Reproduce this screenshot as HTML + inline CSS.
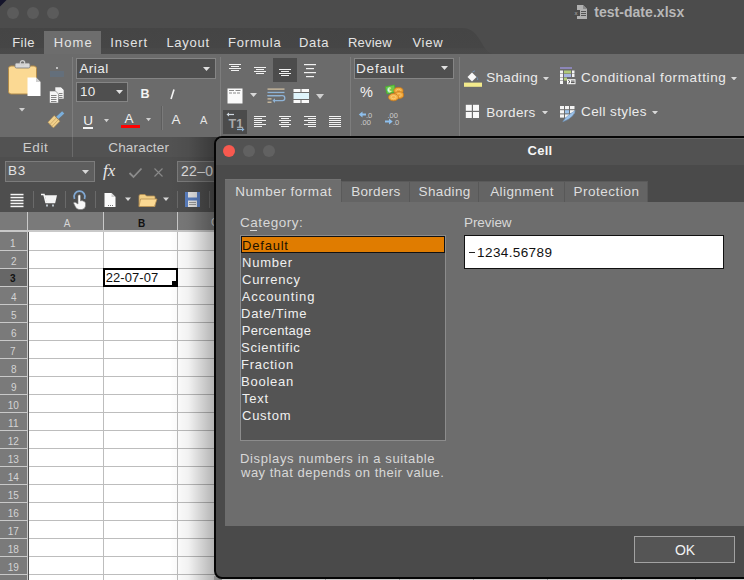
<!DOCTYPE html>
<html><head><meta charset="utf-8">
<style>
*{margin:0;padding:0;box-sizing:border-box}
html,body{width:744px;height:580px;overflow:hidden;background:#4c4c4c;font-family:"Liberation Sans",sans-serif;position:relative}
.a{position:absolute}
.t{position:absolute;white-space:nowrap;line-height:1}
.circ{position:absolute;width:12px;height:12px;border-radius:50%}
</style></head><body>

<div class="a" style="left:0px;top:0px;width:744px;height:28px;background:#4c4c4c;"></div>
<svg class="a" style="left:0px;top:0px;" width="8" height="8" viewBox="0 0 8 8"><path d="M0,0 H6.5 L0,6.5 Z" fill="#15152b"/></svg>
<div class="circ" style="left:7px;top:7px;background:#5b5b5b"></div>
<div class="circ" style="left:27px;top:7px;background:#5b5b5b"></div>
<div class="circ" style="left:47px;top:7px;background:#5b5b5b"></div>
<svg class="a" style="left:574px;top:4px;" width="14" height="16" viewBox="0 0 14 16"><path d="M3,1 H9 L13,5 V15 H3 Z" fill="#b0b0b0"/><path d="M9,1 V5 H13" fill="#8a8a8a"/><rect x="7" y="7" width="5" height="1" fill="#555"/><rect x="7" y="9" width="5" height="1" fill="#555"/><rect x="7" y="11" width="5" height="1" fill="#555"/><rect x="0" y="6" width="6" height="6" fill="#4a4a4a"/><text x="0.5" y="11" font-size="6" font-family="Liberation Sans" fill="#b0b0b0">x</text></svg>
<div class="t" style="left:594.20px;top:5.15px;font-size:14px;font-weight:bold;color:#b8b8b8;letter-spacing:0.039px;">test-date.xlsx</div>
<svg class="a" style="left:0px;top:28px;" width="744" height="26" viewBox="0 0 744 26"><defs><linearGradient id="tbg" x1="0" y1="0" x2="0" y2="1"><stop offset="0" stop-color="#454545"/><stop offset="0.75" stop-color="#464646"/><stop offset="0.8" stop-color="#494949"/><stop offset="1" stop-color="#4a4a4a"/></linearGradient></defs><path d="M0,0 H462 C472,0 476,6 480,12 C484,19 488,26 494,26 H0 Z" fill="url(#tbg)"/></svg>
<div class="a" style="left:44px;top:31px;width:57px;height:23px;background:#6d6d6d;"></div>
<div class="t" style="left:12.20px;top:36.00px;font-size:13px;font-weight:normal;color:#e4e4e4;letter-spacing:0.467px;">File</div>
<div class="t" style="left:53.80px;top:36.00px;font-size:13px;font-weight:normal;color:#e4e4e4;letter-spacing:1.099px;">Home</div>
<div class="t" style="left:110.20px;top:36.00px;font-size:13px;font-weight:normal;color:#e4e4e4;letter-spacing:0.900px;">Insert</div>
<div class="t" style="left:166.40px;top:36.00px;font-size:13px;font-weight:normal;color:#e4e4e4;letter-spacing:0.740px;">Layout</div>
<div class="t" style="left:228.00px;top:36.00px;font-size:13px;font-weight:normal;color:#e4e4e4;letter-spacing:0.850px;">Formula</div>
<div class="t" style="left:299.00px;top:36.00px;font-size:13px;font-weight:normal;color:#e4e4e4;letter-spacing:0.667px;">Data</div>
<div class="t" style="left:348.00px;top:36.00px;font-size:13px;font-weight:normal;color:#e4e4e4;letter-spacing:0.200px;">Review</div>
<div class="t" style="left:412.40px;top:36.00px;font-size:13px;font-weight:normal;color:#e4e4e4;letter-spacing:0.733px;">View</div>
<div class="a" style="left:0px;top:54px;width:744px;height:83px;background:#6b6b6b;"></div>
<div class="a" style="left:72px;top:57px;width:1px;height:80px;background:#7d7d7d;"></div>
<div class="a" style="left:220px;top:57px;width:1px;height:80px;background:#7d7d7d;"></div>
<div class="a" style="left:350px;top:57px;width:1px;height:80px;background:#7d7d7d;"></div>
<div class="a" style="left:459px;top:57px;width:1px;height:80px;background:#7d7d7d;"></div>
<svg class="a" style="left:7px;top:60px;" width="36" height="38" viewBox="0 0 36 38"><rect x="1.5" y="6" width="28" height="28" rx="2.5" fill="#fbd993" stroke="#b08a4a" stroke-width="1"/><rect x="8" y="3" width="15" height="5" rx="1.5" fill="#d8d8d8" stroke="#777" stroke-width="0.8"/><circle cx="15.5" cy="2.8" r="2.2" fill="none" stroke="#cfcfcf" stroke-width="1.2"/><path d="M20.5,17.5 H29 L33.5,22 V36 H20.5 Z" fill="#ffffff"/><path d="M29,17.5 V22 H33.5" fill="#cfcfcf"/></svg>
<svg class="a" style="left:19.0px;top:108.25px;" width="6" height="3.5" viewBox="0 0 6 3.5"><polygon points="0,0 6,0 3.0,3.5" fill="#d0d0d0"/></svg>
<svg class="a" style="left:47px;top:64px;" width="18" height="14" viewBox="0 0 18 14"><rect x="3" y="7" width="14" height="6" fill="#627080" opacity="0.75"/><circle cx="10" cy="4" r="1" fill="#dcdcdc"/></svg>
<svg class="a" style="left:48px;top:86px;" width="18" height="18" viewBox="0 0 18 18"><path d="M7,1 H13 L16,4 V13 H7 Z" fill="#f2f2f2" stroke="#6b6b6b" stroke-width="0.6"/><path d="M1.5,5 H7.5 L10.5,8 V17 H1.5 Z" fill="#f5f5f5" stroke="#6b6b6b" stroke-width="0.6"/><rect x="3" y="9" width="5.5" height="0.9" fill="#777"/><rect x="3" y="11" width="5.5" height="0.9" fill="#777"/><rect x="3" y="13" width="5.5" height="0.9" fill="#777"/><rect x="3" y="15" width="5.5" height="0.9" fill="#777"/><rect x="11" y="7" width="3.5" height="0.9" fill="#777"/><rect x="11" y="9" width="3.5" height="0.9" fill="#777"/><rect x="11" y="11" width="3.5" height="0.9" fill="#777"/></svg>
<svg class="a" style="left:47px;top:111px;" width="18" height="18" viewBox="0 0 18 18"><path d="M10.3,6.8 L16.2,1.3" stroke="#7aaedb" stroke-width="3.2"/><polygon points="0.8,11.2 7.2,4.4 13,10.2 6.4,17" fill="#f1d08b" stroke="#9d8250" stroke-width="0.6"/><path d="M3,13.5 L9.2,7 M5,15.3 L11.2,8.8" stroke="#c7a261" stroke-width="0.8"/></svg>
<div class="a" style="left:76px;top:58px;width:140px;height:21px;background:#4f4f4f;border:1px solid #858585"></div>
<div class="t" style="left:79.40px;top:61.57px;font-size:13.5px;font-weight:normal;color:#ececec;letter-spacing:0.475px;">Arial</div>
<svg class="a" style="left:202.5px;top:66.5px;" width="7" height="4" viewBox="0 0 7 4"><polygon points="0,0 7,0 3.5,4" fill="#e0e0e0"/></svg>
<div class="a" style="left:76px;top:82px;width:52px;height:20px;background:#4f4f4f;border:1px solid #858585"></div>
<div class="t" style="left:80.00px;top:84.57px;font-size:13.5px;font-weight:normal;color:#ececec;letter-spacing:0.300px;">10</div>
<svg class="a" style="left:115.5px;top:90.3px;" width="7" height="4" viewBox="0 0 7 4"><polygon points="0,0 7,0 3.5,4" fill="#e0e0e0"/></svg>
<div class="t" style="left:140.50px;top:88.12px;font-size:12.5px;font-weight:bold;color:#f4f4f4;">B</div>
<svg class="a" style="left:169px;top:89px;" width="7" height="11" viewBox="0 0 7 11"><path d="M5,0.5 L2,10" stroke="#f4f4f4" stroke-width="1.6"/></svg>
<div class="t" style="left:83.30px;top:114.07px;font-size:13.5px;font-weight:normal;color:#f4f4f4;">U</div>
<div class="a" style="left:82.8px;top:127.3px;width:10px;height:1.4px;background:#f4f4f4;"></div>
<svg class="a" style="left:103.5px;top:119.4px;" width="5" height="3.2" viewBox="0 0 5 3.2"><polygon points="0,0 5,0 2.5,3.2" fill="#d0d0d0"/></svg>
<div class="t" style="left:124.60px;top:112.07px;font-size:13.5px;font-weight:normal;color:#f0f0f0;">A</div>
<div class="a" style="left:120.5px;top:124.5px;width:19px;height:3.5px;background:#ff0000;"></div>
<svg class="a" style="left:146.2px;top:118.4px;" width="5" height="3.2" viewBox="0 0 5 3.2"><polygon points="0,0 5,0 2.5,3.2" fill="#d0d0d0"/></svg>
<div class="a" style="left:161px;top:106px;width:1px;height:24px;background:#5e5e5e;"></div>
<div class="a" style="left:162px;top:106px;width:1px;height:24px;background:#7a7a7a;"></div>
<div class="t" style="left:171.50px;top:113.37px;font-size:13.5px;font-weight:normal;color:#ececec;">A</div>
<div class="t" style="left:200.00px;top:115.49px;font-size:11px;font-weight:normal;color:#e4e4e4;">A</div>
<svg class="a" style="left:0px;top:0px;pointer-events:none" width="744" height="140" viewBox="0 0 744 140"><rect x="229.0" y="64.0" width="12" height="1" fill="#f2f2f2"/><rect x="231.0" y="66.0" width="8" height="1" fill="#f2f2f2"/><rect x="229.0" y="68.0" width="12" height="1" fill="#f2f2f2"/><rect x="231.0" y="70.0" width="8" height="1" fill="#f2f2f2"/><rect x="254.0" y="67.0" width="12" height="1" fill="#f2f2f2"/><rect x="256.0" y="69.0" width="8" height="1" fill="#f2f2f2"/><rect x="254.0" y="71.0" width="12" height="1" fill="#f2f2f2"/><rect x="256.0" y="73.0" width="8" height="1" fill="#f2f2f2"/><rect x="273" y="58" width="24" height="24" fill="#4c4c4c"/><rect x="279.0" y="69.0" width="12" height="1" fill="#f2f2f2"/><rect x="281.0" y="71.0" width="8" height="1" fill="#f2f2f2"/><rect x="279.0" y="73.0" width="12" height="1" fill="#f2f2f2"/><rect x="281.0" y="75.0" width="8" height="1" fill="#f2f2f2"/><rect x="304.0" y="64.0" width="12" height="1.2" fill="#f2f2f2"/><rect x="306.0" y="68.0" width="8" height="1.2" fill="#f2f2f2"/><rect x="304.0" y="72.0" width="12" height="1.2" fill="#f2f2f2"/><rect x="306.0" y="76.0" width="8" height="1.2" fill="#f2f2f2"/><rect x="254.0" y="116.0" width="12" height="1" fill="#f2f2f2"/><rect x="254.0" y="118.0" width="8" height="1" fill="#f2f2f2"/><rect x="254.0" y="120.0" width="12" height="1" fill="#f2f2f2"/><rect x="254.0" y="122.0" width="8" height="1" fill="#f2f2f2"/><rect x="254.0" y="124.0" width="12" height="1" fill="#f2f2f2"/><rect x="254.0" y="126.0" width="8" height="1" fill="#f2f2f2"/><rect x="279.0" y="116.0" width="12" height="1" fill="#f2f2f2"/><rect x="281.0" y="118.0" width="8" height="1" fill="#f2f2f2"/><rect x="279.0" y="120.0" width="12" height="1" fill="#f2f2f2"/><rect x="281.0" y="122.0" width="8" height="1" fill="#f2f2f2"/><rect x="279.0" y="124.0" width="12" height="1" fill="#f2f2f2"/><rect x="281.0" y="126.0" width="8" height="1" fill="#f2f2f2"/><rect x="304.0" y="116.0" width="12" height="1" fill="#f2f2f2"/><rect x="308.0" y="118.0" width="8" height="1" fill="#f2f2f2"/><rect x="304.0" y="120.0" width="12" height="1" fill="#f2f2f2"/><rect x="308.0" y="122.0" width="8" height="1" fill="#f2f2f2"/><rect x="304.0" y="124.0" width="12" height="1" fill="#f2f2f2"/><rect x="308.0" y="126.0" width="8" height="1" fill="#f2f2f2"/><rect x="329.0" y="116.0" width="12" height="1" fill="#f2f2f2"/><rect x="329.0" y="118.0" width="12" height="1" fill="#f2f2f2"/><rect x="329.0" y="120.0" width="12" height="1" fill="#f2f2f2"/><rect x="329.0" y="122.0" width="12" height="1" fill="#f2f2f2"/><rect x="329.0" y="124.0" width="12" height="1" fill="#f2f2f2"/><rect x="329.0" y="126.0" width="12" height="1" fill="#f2f2f2"/></svg>
<svg class="a" style="left:227px;top:88px;" width="16" height="16" viewBox="0 0 16 16"><rect x="0.5" y="0.5" width="15" height="15" fill="#fafafa"/><rect x="2" y="2" width="5" height="1" fill="#888"/><rect x="8.5" y="2" width="5" height="1" fill="#888"/><rect x="2" y="4.5" width="3" height="1" fill="#888"/><rect x="6" y="4.5" width="3" height="1" fill="#888"/><rect x="10" y="4.5" width="3" height="1" fill="#888"/></svg>
<svg class="a" style="left:250.1px;top:93.4px;" width="7" height="4" viewBox="0 0 7 4"><polygon points="0,0 7,0 3.5,4" fill="#d8d8d8"/></svg>
<svg class="a" style="left:267px;top:88px;" width="19" height="16" viewBox="0 0 19 16"><rect x="0.5" y="0.5" width="17" height="1.2" fill="#d9c6a6"/><rect x="0.5" y="3.8" width="17" height="1.3" fill="#8fb3d6"/><rect x="0.5" y="7" width="13" height="1.3" fill="#8fb3d6"/><path d="M0.5,7.6 H15.5 Q17.8,7.6 17.8,10.2 Q17.8,12.6 15.5,12.6 H8" stroke="#8fb3d6" stroke-width="1.3" fill="none"/><path d="M8,10.3 L5.5,12.6 L8,14.9 Z" fill="#8fb3d6"/><rect x="0.5" y="10.3" width="4" height="1.2" fill="#d9c6a6"/><rect x="0.5" y="13.6" width="4" height="1.2" fill="#d9c6a6"/></svg>
<svg class="a" style="left:293px;top:88px;" width="17" height="16" viewBox="0 0 17 16"><rect x="0.5" y="1" width="7" height="3" fill="#fafafa"/><rect x="8.5" y="1" width="7.5" height="3" fill="#fafafa"/><rect x="0.5" y="5" width="15.5" height="6" fill="#dff4fb"/><rect x="0.5" y="12" width="7" height="3" fill="#fafafa"/><rect x="8.5" y="12" width="7.5" height="3" fill="#fafafa"/></svg>
<svg class="a" style="left:316.0px;top:93.5px;" width="8" height="5" viewBox="0 0 8 5"><polygon points="0,0 8,0 4.0,5" fill="#d0d0d0"/></svg>
<svg class="a" style="left:223px;top:110px;" width="24" height="24" viewBox="0 0 24 24"><rect x="0" y="0" width="24" height="24" fill="#4b4b4b"/><text x="5.5" y="17.5" font-size="12.5" font-weight="bold" font-family="Liberation Sans" fill="#a9a9a9">T1</text><path d="M11,4.5 H5" stroke="#cfd8e0" stroke-width="1.2"/><path d="M6,2.5 L3.5,4.5 L6,6.5 Z" fill="#cfd8e0"/><path d="M14,19.5 H20" stroke="#8fb3d6" stroke-width="1.2"/><path d="M19,17.5 L21.5,19.5 L19,21.5 Z" fill="#8fb3d6"/></svg>
<div class="a" style="left:354px;top:58px;width:100px;height:21px;background:#4f4f4f;border:1px solid #858585"></div>
<div class="t" style="left:356.00px;top:61.57px;font-size:13.5px;font-weight:normal;color:#ececec;letter-spacing:0.833px;">Default</div>
<svg class="a" style="left:441.0px;top:66.3px;" width="7" height="4" viewBox="0 0 7 4"><polygon points="0,0 7,0 3.5,4" fill="#e0e0e0"/></svg>
<div class="t" style="left:360.00px;top:85.23px;font-size:14.5px;font-weight:normal;color:#f2f2f2;">%</div>
<svg class="a" style="left:384px;top:84px;" width="20" height="18" viewBox="0 0 20 18"><g transform="rotate(-12 6 5)"><rect x="1.5" y="1.5" width="10" height="8" rx="1" fill="#4fb032"/><rect x="2.5" y="2.5" width="8" height="6" fill="#6cc94a"/><text x="3.3" y="8.2" font-size="7" font-weight="bold" font-family="Liberation Sans" fill="#f2ffe8">€</text></g><ellipse cx="14.5" cy="6.8" rx="4.6" ry="3.4" fill="#f1a73c" stroke="#c8781b" stroke-width="0.8"/><ellipse cx="14.5" cy="6.8" rx="2.3" ry="1.5" fill="none" stroke="#fbd07a" stroke-width="0.7"/><ellipse cx="15" cy="11" rx="4.6" ry="3.4" fill="#f1a73c" stroke="#c8781b" stroke-width="0.8"/><ellipse cx="15" cy="11" rx="2.3" ry="1.5" fill="none" stroke="#fbd07a" stroke-width="0.7"/><ellipse cx="9.5" cy="13.2" rx="5" ry="3.6" fill="#f4b048" stroke="#c8781b" stroke-width="0.8"/><ellipse cx="9.5" cy="13.2" rx="2.5" ry="1.6" fill="none" stroke="#fcd88a" stroke-width="0.7"/></svg>
<svg class="a" style="left:358px;top:110px;" width="18" height="16" viewBox="0 0 18 16"><path d="M8,4.5 H3" stroke="#8ec0ee" stroke-width="2"/><path d="M4.5,1.5 L0.8,4.5 L4.5,7.5 Z" fill="#8ec0ee"/><text x="8" y="8" font-size="7.5" font-family="Liberation Sans" fill="#cfcfcf">.0</text><text x="2.5" y="14.5" font-size="7.5" font-family="Liberation Sans" fill="#cfcfcf">.00</text></svg>
<svg class="a" style="left:384px;top:110px;" width="18" height="16" viewBox="0 0 18 16"><text x="3.5" y="8" font-size="7.5" font-family="Liberation Sans" fill="#cfcfcf">.00</text><path d="M1,11.5 H6" stroke="#8ec0ee" stroke-width="2"/><path d="M5,8.5 L8.7,11.5 L5,14.5 Z" fill="#8ec0ee"/><text x="9" y="14.5" font-size="7.5" font-family="Liberation Sans" fill="#cfcfcf">.0</text></svg>
<svg class="a" style="left:463px;top:70px;" width="20" height="18" viewBox="0 0 20 18"><path d="M4.5,7 L9,2.5 L13.5,7 L9,11.5 Z" fill="#f8f8f8"/><path d="M9.5,2 L12,0.8" stroke="#6f8eb0" stroke-width="1"/><path d="M13.5,7 Q15.5,9 14.5,10" stroke="#6f8eb0" stroke-width="1" fill="none"/><rect x="1" y="12.6" width="18" height="4.2" fill="#f3ea8c"/></svg>
<div class="t" style="left:486.20px;top:70.57px;font-size:13.5px;font-weight:normal;color:#ececec;letter-spacing:0.333px;">Shading</div>
<svg class="a" style="left:543.2px;top:76.85px;" width="6" height="3.5" viewBox="0 0 6 3.5"><polygon points="0,0 6,0 3.0,3.5" fill="#d8d8d8"/></svg>
<svg class="a" style="left:465px;top:104px;" width="15" height="15" viewBox="0 0 15 15"><rect x="0.8" y="0.8" width="6" height="6" fill="#f8f8f8"/><rect x="8" y="0.8" width="6" height="6" fill="#f8f8f8"/><rect x="0.8" y="8" width="6" height="6" fill="#f8f8f8"/><rect x="8" y="8" width="6" height="6" fill="#f8f8f8"/></svg>
<div class="t" style="left:486.20px;top:105.57px;font-size:13.5px;font-weight:normal;color:#ececec;letter-spacing:0.300px;">Borders</div>
<svg class="a" style="left:541.5px;top:110.95px;" width="6" height="3.5" viewBox="0 0 6 3.5"><polygon points="0,0 6,0 3.0,3.5" fill="#d8d8d8"/></svg>
<svg class="a" style="left:559px;top:66px;" width="18" height="19" viewBox="0 0 18 19"><rect x="1" y="1" width="12" height="2" fill="#8c86b8"/><rect x="1" y="4.5" width="3" height="3" fill="#f4f4f4"/><rect x="5" y="4.5" width="7" height="3" fill="#b3cc7a"/><rect x="13" y="4.5" width="2.5" height="3" fill="#f4f4f4"/><rect x="1" y="8" width="3" height="3" fill="#f4f4f4"/><rect x="5" y="8" width="7" height="3" fill="#a7b4e0"/><rect x="13" y="8" width="2.5" height="3" fill="#f4f4f4"/><rect x="1" y="11.5" width="3" height="3" fill="#f4f4f4"/><rect x="5" y="11.5" width="3" height="3" fill="#b3cc7a"/><rect x="1" y="15" width="3" height="3" fill="#f4f4f4"/><rect x="8" y="13.2" width="8.5" height="5" fill="#f8f8f8"/><path d="M9.3,14.3 L11,15.7 L9.3,17.1" stroke="#333" stroke-width="0.9" fill="none"/><rect x="12" y="14.6" width="3.6" height="0.9" fill="#333"/><rect x="12" y="16.2" width="3.6" height="0.9" fill="#333"/></svg>
<div class="t" style="left:581.00px;top:70.57px;font-size:13.5px;font-weight:normal;color:#ececec;letter-spacing:0.643px;">Conditional formatting</div>
<svg class="a" style="left:731.4px;top:76.55px;" width="6" height="3.5" viewBox="0 0 6 3.5"><polygon points="0,0 6,0 3.0,3.5" fill="#d8d8d8"/></svg>
<svg class="a" style="left:559px;top:104px;" width="18" height="19" viewBox="0 0 18 19"><rect x="1" y="2" width="4" height="3.2" fill="#f4f4f4"/><rect x="6" y="2" width="4" height="3.2" fill="#f4f4f4"/><rect x="11" y="2" width="4.5" height="3.2" fill="#f4f4f4"/><rect x="1" y="6.2" width="4" height="3.2" fill="#f4f4f4"/><rect x="6" y="6.2" width="4" height="3.2" fill="#9cc2ea"/><rect x="11" y="6.2" width="4.5" height="3.2" fill="#f4f4f4"/><rect x="1" y="10.4" width="4" height="3.2" fill="#f4f4f4"/><rect x="6" y="10.4" width="4" height="3.2" fill="#f4f4f4"/><path d="M3.8,17.8 Q6,13.5 11,10 L16.2,6.6 Q15.8,9 13.5,12 Q9.5,16 3.8,17.8 Z" fill="#9cc2ea" stroke="#6d92b8" stroke-width="0.6"/></svg>
<div class="t" style="left:581.00px;top:104.57px;font-size:13.5px;font-weight:normal;color:#ececec;letter-spacing:0.400px;">Cell styles</div>
<svg class="a" style="left:652.0px;top:110.55px;" width="6" height="3.5" viewBox="0 0 6 3.5"><polygon points="0,0 6,0 3.0,3.5" fill="#d8d8d8"/></svg>
<div class="a" style="left:0px;top:137px;width:744px;height:20px;background:#525252;"></div>
<div class="a" style="left:72px;top:137px;width:1px;height:20px;background:#6a6a6a;"></div>
<div class="a" style="left:219px;top:137px;width:1px;height:20px;background:#6a6a6a;"></div>
<div class="t" style="left:22.80px;top:140.57px;font-size:13.5px;font-weight:normal;color:#cdcdcd;letter-spacing:0.566px;">Edit</div>
<div class="t" style="left:108.20px;top:140.57px;font-size:13.5px;font-weight:normal;color:#cdcdcd;letter-spacing:0.189px;">Character</div>
<div class="a" style="left:0px;top:157px;width:744px;height:55px;background:#4e4e4e;"></div>
<div class="a" style="left:5px;top:161px;width:90px;height:21px;background:#5e5e5e;border:1px solid #7c7c7c"></div>
<div class="t" style="left:8.00px;top:163.57px;font-size:13.5px;font-weight:normal;color:#e2e2e2;letter-spacing:0.700px;">B3</div>
<svg class="a" style="left:81.5px;top:170.0px;" width="7" height="4" viewBox="0 0 7 4"><polygon points="0,0 7,0 3.5,4" fill="#d8d8d8"/></svg>
<div class="a" style="line-height:1;left:103px;top:162px;font-size:17px;font-family:'Liberation Serif',serif;font-style:italic;color:#e8e8e8">fx</div>
<svg class="a" style="left:128px;top:167px;" width="15" height="12" viewBox="0 0 15 12"><path d="M1.5,6 L5.5,10 L13.5,1.5" stroke="#8c8c8c" stroke-width="1.8" fill="none"/></svg>
<svg class="a" style="left:153px;top:167px;" width="11" height="11" viewBox="0 0 11 11"><path d="M1.5,1.5 L9.5,9.5 M9.5,1.5 L1.5,9.5" stroke="#8a8a8a" stroke-width="1.1"/></svg>
<div class="a" style="left:177px;top:161px;width:50px;height:21px;background:#5e5e5e;border:1px solid #7c7c7c"></div>
<div class="t" style="left:181.00px;top:164.15px;font-size:14px;font-weight:normal;color:#e2e2e2;letter-spacing:0.3px">22–0</div>
<svg class="a" style="left:0px;top:186px;" width="220" height="26" viewBox="0 0 220 26"><rect x="10.5" y="7.8" width="13" height="1.5" fill="#f6f6f6"/><rect x="10.5" y="10.8" width="13" height="1.5" fill="#f6f6f6"/><rect x="10.5" y="13.8" width="13" height="1.5" fill="#f6f6f6"/><rect x="10.5" y="16.7" width="13" height="1.5" fill="#f6f6f6"/><rect x="10.5" y="19.7" width="13" height="1.5" fill="#f6f6f6"/><rect x="33" y="5" width="1" height="17" fill="#6a6a6a"/><path d="M41,8.5 H44 L46,16.5 H54.5 L56,10 H45" stroke="#f4f4f4" stroke-width="1.6" fill="none"/><path d="M45,10 H56 L54.5,16.5 H46.5 Z" fill="#f4f4f4"/><rect x="46" y="18.5" width="2" height="2" fill="#b9c2c9"/><rect x="52" y="18.5" width="2" height="2" fill="#b9c2c9"/><rect x="65" y="5" width="1" height="17" fill="#6a6a6a"/><path d="M74.5,13 A5.5,5.5 0 1 1 84.5,13" stroke="#7fa6d0" stroke-width="1.8" fill="none"/><path d="M78,9.5 Q79.3,8.2 80.5,9.5 V15 Q82,14 83.5,15.2 Q85,15.5 85.5,17 V20 Q85,23 82,23.5 H79 Q76.5,23 75.5,21 L73.5,17 Q73.8,15.8 75.2,16.3 L78,18 Z" fill="#f8f8f8" stroke="#777" stroke-width="0.6"/><rect x="95" y="5" width="1" height="17" fill="#6a6a6a"/><path d="M104.5,7 H111.5 L115.5,11 V21 H104.5 Z" fill="#fafafa"/><path d="M111.5,7 V11 H115.5" fill="#cfcfcf"/><rect x="108" y="19" width="1" height="1" fill="#777"/><rect x="110" y="19" width="1" height="1" fill="#777"/><rect x="112" y="19" width="1" height="1" fill="#777"/><polygon points="125,11.5 131,11.5 128,15" fill="#d8d8d8"/><path d="M139,10 Q139,8.5 140.5,8.5 H145 L146.5,10 H154 Q155,10 155,11 V20.5 H139 Z" fill="#f2cf86" stroke="#b48f53" stroke-width="0.8"/><path d="M140.5,13 H157 L154.5,20.5 H139 Z" fill="#fbd993" stroke="#b48f53" stroke-width="0.8"/><polygon points="163,11.5 169,11.5 166,15" fill="#d8d8d8"/><rect x="177" y="5" width="1" height="17" fill="#6a6a6a"/><rect x="185" y="6" width="15" height="15" fill="#5a7fc0"/><rect x="188" y="6" width="9" height="5.5" fill="#e6e6e6"/><rect x="188" y="14.5" width="9" height="6.5" fill="#e6e6e6"/><rect x="189" y="16" width="7" height="1" fill="#999"/><rect x="189" y="18" width="7" height="1" fill="#999"/><rect x="209" y="5" width="1" height="17" fill="#6a6a6a"/></svg>
<div class="a" style="left:0px;top:212px;width:744px;height:368px;background:#ffffff;"></div>
<div class="a" style="left:0px;top:212px;width:744px;height:19px;background:#7a7a7a;"></div>
<div class="a" style="left:103px;top:212px;width:75px;height:19px;background:#707070;"></div>
<div class="a" style="left:0px;top:230px;width:744px;height:2px;background:#c9c9c9;"></div>
<div class="a" style="left:0px;top:232px;width:27px;height:348px;background:#7a7a7a;"></div>
<div class="a" style="left:0px;top:269px;width:27px;height:17px;background:#676767;"></div>
<div class="a" style="left:27px;top:212px;width:1px;height:368px;background:#c9c9c9;"></div>
<div class="a" style="left:28px;top:232px;width:1px;height:348px;background:#505050;"></div>
<div class="a" style="left:103px;top:212px;width:1px;height:19px;background:#c9c9c9;"></div>
<div class="a" style="left:103px;top:232px;width:1px;height:348px;background:#bdbdbd;"></div>
<div class="a" style="left:177px;top:212px;width:1px;height:19px;background:#c9c9c9;"></div>
<div class="a" style="left:177px;top:232px;width:1px;height:348px;background:#bdbdbd;"></div>
<div class="a" style="left:251px;top:212px;width:1px;height:19px;background:#c9c9c9;"></div>
<div class="a" style="left:251px;top:232px;width:1px;height:348px;background:#bdbdbd;"></div>
<div class="a" style="left:325px;top:212px;width:1px;height:19px;background:#c9c9c9;"></div>
<div class="a" style="left:325px;top:232px;width:1px;height:348px;background:#bdbdbd;"></div>
<div class="a" style="left:399px;top:212px;width:1px;height:19px;background:#c9c9c9;"></div>
<div class="a" style="left:399px;top:232px;width:1px;height:348px;background:#bdbdbd;"></div>
<div class="a" style="left:473px;top:212px;width:1px;height:19px;background:#c9c9c9;"></div>
<div class="a" style="left:473px;top:232px;width:1px;height:348px;background:#bdbdbd;"></div>
<div class="a" style="left:547px;top:212px;width:1px;height:19px;background:#c9c9c9;"></div>
<div class="a" style="left:547px;top:232px;width:1px;height:348px;background:#bdbdbd;"></div>
<div class="a" style="left:621px;top:212px;width:1px;height:19px;background:#c9c9c9;"></div>
<div class="a" style="left:621px;top:232px;width:1px;height:348px;background:#bdbdbd;"></div>
<div class="a" style="left:695px;top:212px;width:1px;height:19px;background:#c9c9c9;"></div>
<div class="a" style="left:695px;top:232px;width:1px;height:348px;background:#bdbdbd;"></div>
<div class="a" style="left:0px;top:250px;width:27px;height:1px;background:#c9c9c9;"></div>
<div class="a" style="left:29px;top:250px;width:200px;height:1px;background:#bdbdbd;"></div>
<div class="a" style="left:0px;top:268px;width:27px;height:1px;background:#c9c9c9;"></div>
<div class="a" style="left:29px;top:268px;width:200px;height:1px;background:#bdbdbd;"></div>
<div class="a" style="left:0px;top:286px;width:27px;height:1px;background:#c9c9c9;"></div>
<div class="a" style="left:29px;top:286px;width:200px;height:1px;background:#bdbdbd;"></div>
<div class="a" style="left:0px;top:304px;width:27px;height:1px;background:#c9c9c9;"></div>
<div class="a" style="left:29px;top:304px;width:200px;height:1px;background:#bdbdbd;"></div>
<div class="a" style="left:0px;top:322px;width:27px;height:1px;background:#c9c9c9;"></div>
<div class="a" style="left:29px;top:322px;width:200px;height:1px;background:#bdbdbd;"></div>
<div class="a" style="left:0px;top:340px;width:27px;height:1px;background:#c9c9c9;"></div>
<div class="a" style="left:29px;top:340px;width:200px;height:1px;background:#bdbdbd;"></div>
<div class="a" style="left:0px;top:358px;width:27px;height:1px;background:#c9c9c9;"></div>
<div class="a" style="left:29px;top:358px;width:200px;height:1px;background:#bdbdbd;"></div>
<div class="a" style="left:0px;top:376px;width:27px;height:1px;background:#c9c9c9;"></div>
<div class="a" style="left:29px;top:376px;width:200px;height:1px;background:#bdbdbd;"></div>
<div class="a" style="left:0px;top:394px;width:27px;height:1px;background:#c9c9c9;"></div>
<div class="a" style="left:29px;top:394px;width:200px;height:1px;background:#bdbdbd;"></div>
<div class="a" style="left:0px;top:412px;width:27px;height:1px;background:#c9c9c9;"></div>
<div class="a" style="left:29px;top:412px;width:200px;height:1px;background:#bdbdbd;"></div>
<div class="a" style="left:0px;top:430px;width:27px;height:1px;background:#c9c9c9;"></div>
<div class="a" style="left:29px;top:430px;width:200px;height:1px;background:#bdbdbd;"></div>
<div class="a" style="left:0px;top:448px;width:27px;height:1px;background:#c9c9c9;"></div>
<div class="a" style="left:29px;top:448px;width:200px;height:1px;background:#bdbdbd;"></div>
<div class="a" style="left:0px;top:466px;width:27px;height:1px;background:#c9c9c9;"></div>
<div class="a" style="left:29px;top:466px;width:200px;height:1px;background:#bdbdbd;"></div>
<div class="a" style="left:0px;top:484px;width:27px;height:1px;background:#c9c9c9;"></div>
<div class="a" style="left:29px;top:484px;width:200px;height:1px;background:#bdbdbd;"></div>
<div class="a" style="left:0px;top:502px;width:27px;height:1px;background:#c9c9c9;"></div>
<div class="a" style="left:29px;top:502px;width:200px;height:1px;background:#bdbdbd;"></div>
<div class="a" style="left:0px;top:520px;width:27px;height:1px;background:#c9c9c9;"></div>
<div class="a" style="left:29px;top:520px;width:200px;height:1px;background:#bdbdbd;"></div>
<div class="a" style="left:0px;top:538px;width:27px;height:1px;background:#c9c9c9;"></div>
<div class="a" style="left:29px;top:538px;width:200px;height:1px;background:#bdbdbd;"></div>
<div class="a" style="left:0px;top:556px;width:27px;height:1px;background:#c9c9c9;"></div>
<div class="a" style="left:29px;top:556px;width:200px;height:1px;background:#bdbdbd;"></div>
<div class="a" style="left:0px;top:574px;width:27px;height:1px;background:#c9c9c9;"></div>
<div class="a" style="left:29px;top:574px;width:200px;height:1px;background:#bdbdbd;"></div>
<div class="t" style="left:-33.00px;width:200px;text-align:center;top:218.53px;font-size:10px;font-weight:normal;color:#d6d6d6;">A</div>
<div class="t" style="left:41.60px;width:200px;text-align:center;top:218.53px;font-size:10px;font-weight:bold;color:#111111;">B</div>
<div class="t" style="left:114.50px;width:200px;text-align:center;top:217.53px;font-size:10px;font-weight:normal;color:#d6d6d6;">C</div>
<div class="t" style="left:-87.20px;width:200px;text-align:center;top:238.53px;font-size:10px;font-weight:normal;color:#d4d4d4;">1</div>
<div class="t" style="left:-86.20px;width:200px;text-align:center;top:256.53px;font-size:10px;font-weight:normal;color:#d4d4d4;">2</div>
<div class="t" style="left:-87.20px;width:200px;text-align:center;top:273.54px;font-size:10px;font-weight:bold;color:#111111;">3</div>
<div class="t" style="left:-86.20px;width:200px;text-align:center;top:292.54px;font-size:10px;font-weight:normal;color:#d4d4d4;">4</div>
<div class="t" style="left:-86.20px;width:200px;text-align:center;top:310.54px;font-size:10px;font-weight:normal;color:#d4d4d4;">5</div>
<div class="t" style="left:-86.20px;width:200px;text-align:center;top:328.54px;font-size:10px;font-weight:normal;color:#d4d4d4;">6</div>
<div class="t" style="left:-87.20px;width:200px;text-align:center;top:346.54px;font-size:10px;font-weight:normal;color:#d4d4d4;">7</div>
<div class="t" style="left:-86.20px;width:200px;text-align:center;top:364.54px;font-size:10px;font-weight:normal;color:#d4d4d4;">8</div>
<div class="t" style="left:-86.20px;width:200px;text-align:center;top:382.54px;font-size:10px;font-weight:normal;color:#d4d4d4;">9</div>
<div class="t" style="left:-86.70px;width:200px;text-align:center;top:400.54px;font-size:10px;font-weight:normal;color:#d4d4d4;">10</div>
<div class="t" style="left:-86.70px;width:200px;text-align:center;top:418.54px;font-size:10px;font-weight:normal;color:#d4d4d4;">11</div>
<div class="t" style="left:-86.70px;width:200px;text-align:center;top:436.54px;font-size:10px;font-weight:normal;color:#d4d4d4;">12</div>
<div class="t" style="left:-86.70px;width:200px;text-align:center;top:454.54px;font-size:10px;font-weight:normal;color:#d4d4d4;">13</div>
<div class="t" style="left:-86.70px;width:200px;text-align:center;top:472.54px;font-size:10px;font-weight:normal;color:#d4d4d4;">14</div>
<div class="t" style="left:-86.70px;width:200px;text-align:center;top:490.54px;font-size:10px;font-weight:normal;color:#d4d4d4;">15</div>
<div class="t" style="left:-86.70px;width:200px;text-align:center;top:508.54px;font-size:10px;font-weight:normal;color:#d4d4d4;">16</div>
<div class="t" style="left:-86.70px;width:200px;text-align:center;top:526.53px;font-size:10px;font-weight:normal;color:#d4d4d4;">17</div>
<div class="t" style="left:-86.70px;width:200px;text-align:center;top:544.53px;font-size:10px;font-weight:normal;color:#d4d4d4;">18</div>
<div class="t" style="left:-86.70px;width:200px;text-align:center;top:562.53px;font-size:10px;font-weight:normal;color:#d4d4d4;">19</div>
<div class="a" style="left:103px;top:268px;width:75px;height:19px;background:transparent;border:2px solid #000"></div>
<div class="a" style="left:172px;top:281px;width:6px;height:6px;background:#000;"></div>
<div class="t" style="left:105.80px;top:271.00px;font-size:13px;font-weight:normal;color:#111111;letter-spacing:0.056px;">22-07-07</div>
<div class="a" style="left:170px;top:137px;width:52px;height:443px;background:linear-gradient(to right, rgba(0,0,0,0) 0%, rgba(0,0,0,0.05) 35%, rgba(0,0,0,0.30) 86%, rgba(0,0,0,0.34) 100%);"></div>
<div class="a" style="left:214px;top:576px;width:530px;height:4px;background:rgba(0,0,0,0.2);"></div>
<div class="a" style="left:214px;top:136px;width:560px;height:443px;background:#4a4a4a;border:2px solid #050505;border-radius:8px;overflow:hidden"><div class="a" style="left:0;top:0;width:560px;height:27px;background:#525252;border-top:1px solid #666"></div></div>
<div class="circ" style="left:222.7px;top:145px;background:#f8594f"></div>
<div class="circ" style="left:242.8px;top:145px;background:#616161"></div>
<div class="circ" style="left:263px;top:145px;background:#616161"></div>
<div class="t" style="left:527.60px;top:144.00px;font-size:13px;font-weight:bold;color:#f6f6f6;letter-spacing:0.267px;">Cell</div>
<div class="a" style="left:341px;top:181px;width:307px;height:22px;background:#646464;border:1px solid #5a5a5a;border-bottom:none"></div>
<div class="a" style="left:409px;top:182px;width:1px;height:20px;background:#585858;"></div>
<div class="a" style="left:478px;top:182px;width:1px;height:20px;background:#585858;"></div>
<div class="a" style="left:564px;top:182px;width:1px;height:20px;background:#585858;"></div>
<div class="a" style="left:225px;top:179px;width:116px;height:24px;background:#6d6d6d;border-top:1px solid #737373"></div>
<div class="t" style="left:235.20px;top:184.57px;font-size:13.5px;font-weight:normal;color:#dedede;letter-spacing:0.516px;">Number format</div>
<div class="t" style="left:351.20px;top:184.57px;font-size:13.5px;font-weight:normal;color:#dedede;letter-spacing:0.300px;">Borders</div>
<div class="t" style="left:418.60px;top:184.57px;font-size:13.5px;font-weight:normal;color:#dedede;letter-spacing:0.367px;">Shading</div>
<div class="t" style="left:490.20px;top:184.57px;font-size:13.5px;font-weight:normal;color:#dedede;letter-spacing:0.411px;">Alignment</div>
<div class="t" style="left:573.40px;top:184.57px;font-size:13.5px;font-weight:normal;color:#dedede;letter-spacing:0.534px;">Protection</div>
<div class="a" style="left:225px;top:202px;width:519px;height:324px;background:#6d6d6d;"></div>
<div class="t" style="left:240.00px;top:215.57px;font-size:13.5px;font-weight:normal;color:#d8d8d8;letter-spacing:0.539px;">Category:</div>
<div class="a" style="left:250px;top:230.3px;width:7px;height:1px;background:#d8d8d8;"></div>
<div class="t" style="left:464.00px;top:215.57px;font-size:13.5px;font-weight:normal;color:#d8d8d8;letter-spacing:-0.066px;">Preview</div>
<div class="a" style="left:240px;top:235px;width:206px;height:206px;background:#545454;border:1px solid #8c8c8c"></div>
<div class="a" style="left:241px;top:236px;width:204px;height:17px;background:#e07c00;border:1px solid #111"></div>
<div class="t" style="left:242.00px;top:239.00px;font-size:13px;font-weight:normal;color:#1c1200;letter-spacing:0.799px;">Default</div>
<div class="t" style="left:242.00px;top:256.00px;font-size:13px;font-weight:normal;color:#f0f0f0;letter-spacing:0.760px;">Number</div>
<div class="t" style="left:242.00px;top:273.00px;font-size:13px;font-weight:normal;color:#f0f0f0;letter-spacing:0.75px">Currency</div>
<div class="t" style="left:241.70px;top:290.00px;font-size:13px;font-weight:normal;color:#f0f0f0;letter-spacing:0.944px;">Accounting</div>
<div class="t" style="left:241.00px;top:307.00px;font-size:13px;font-weight:normal;color:#f0f0f0;letter-spacing:0.75px">Date/Time</div>
<div class="t" style="left:241.70px;top:324.00px;font-size:13px;font-weight:normal;color:#f0f0f0;letter-spacing:0.300px;">Percentage</div>
<div class="t" style="left:241.00px;top:341.00px;font-size:13px;font-weight:normal;color:#f0f0f0;letter-spacing:0.75px">Scientific</div>
<div class="t" style="left:241.00px;top:358.00px;font-size:13px;font-weight:normal;color:#f0f0f0;letter-spacing:0.75px">Fraction</div>
<div class="t" style="left:241.00px;top:375.00px;font-size:13px;font-weight:normal;color:#f0f0f0;letter-spacing:0.75px">Boolean</div>
<div class="t" style="left:242.00px;top:392.00px;font-size:13px;font-weight:normal;color:#f0f0f0;letter-spacing:0.75px">Text</div>
<div class="t" style="left:242.00px;top:409.00px;font-size:13px;font-weight:normal;color:#f0f0f0;letter-spacing:0.75px">Custom</div>
<div class="a" style="left:464px;top:235px;width:260px;height:34px;background:#ffffff;border:1.5px solid #111"></div>
<div class="a" style="left:468.5px;top:251.8px;width:6px;height:1.3px;background:#222;"></div>
<div class="t" style="left:477.10px;top:245.77px;font-size:13.5px;font-weight:normal;color:#111111;letter-spacing:0.390px;">1234.56789</div>
<div class="t" style="left:240.00px;top:452.00px;font-size:13px;font-weight:normal;color:#d8d8d8;letter-spacing:0.630px;">Displays numbers in a suitable</div>
<div class="t" style="left:241.00px;top:466.00px;font-size:13px;font-weight:normal;color:#d8d8d8;letter-spacing:0.503px;">way that depends on their value.</div>
<div class="a" style="left:634px;top:536px;width:101px;height:27px;background:#555555;border:1px solid #a2a2a2"></div>
<div class="t" style="left:585.00px;width:200px;text-align:center;top:543.15px;font-size:14px;font-weight:normal;color:#f2f2f2;">OK</div>
</body></html>
